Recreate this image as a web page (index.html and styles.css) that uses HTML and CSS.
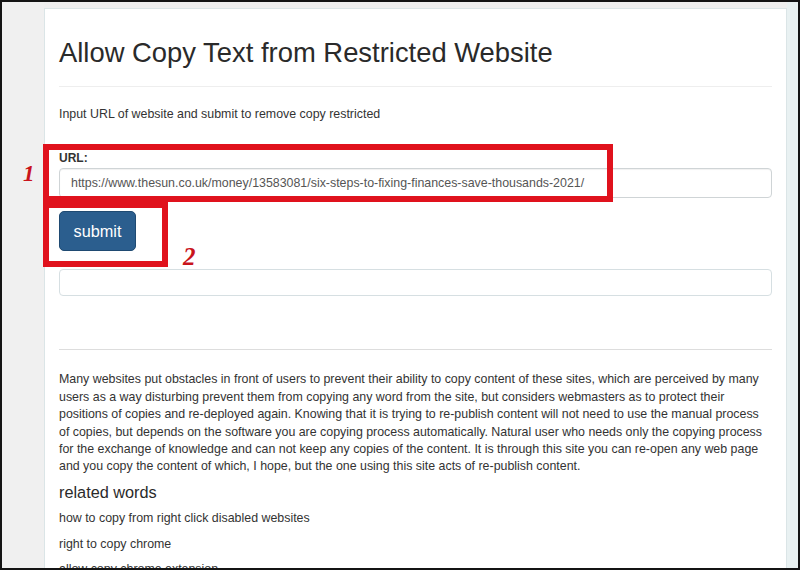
FILE: index.html
```html
<!DOCTYPE html>
<html lang="en">
<head>
<meta charset="utf-8">
<title>Allow Copy Text from Restricted Website</title>
<link rel="stylesheet" href="styles.css">
</head>
<body>
<div class="frame">
  <div class="gutter"></div>
  <main class="panel">
    <h2 class="title">Allow Copy Text from Restricted Website</h2>
    <hr class="rule">
    <p class="intro">Input URL of website and submit to remove copy restricted</p>
    <form class="form">
      <label class="label" for="url">URL:</label>
      <input class="field" id="url" type="text" value="https://www.thesun.co.uk/money/13583081/six-steps-to-fixing-finances-save-thousands-2021/">
      <button class="btn" type="button">submit</button>
      <div class="result"></div>
    </form>
    <hr class="rule rule-2">
    <p class="about">Many websites put obstacles in front of users to prevent their ability to copy content of these sites, which are perceived by many users as a way disturbing prevent them from copying any word from the site, but considers webmasters as to protect their positions of copies and re-deployed again. Knowing that it is trying to re-publish content will not need to use the manual process of copies, but depends on the software you are copying process automatically. Natural user who needs only the copying process for the exchange of knowledge and can not keep any copies of the content. It is through this site you can re-open any web page and you copy the content of which, I hope, but the one using this site acts of re-publish content.</p>
    <h4 class="related">related words</h4>
    <ul class="words">
      <li>how to copy from right click disabled websites</li>
      <li>right to copy chrome</li>
      <li>allow copy chrome extension</li>
    </ul>
  </main>
  <div class="strip"></div>

  <div class="mark mark-1"></div>
  <div class="mark mark-2"></div>
  <span class="num num-1">1</span>
  <span class="num num-2">2</span>
</div>
</body>
</html>
```

FILE: styles.css
```css
* { box-sizing: border-box; }

html, body {
  margin: 0;
  padding: 0;
  background: #111;
}

.frame {
  position: relative;
  width: 800px;
  height: 570px;
  border: 2px solid #141414;
  overflow: hidden;
  display: flex;
  align-items: flex-start;
  background: #efefef;
  font-family: "Liberation Sans", Arial, Helvetica, sans-serif;
  color: #333;
}

.gutter {
  width: 42px;
  flex: none;
  align-self: stretch;
  background: #f0f0f0;
}

.panel {
  width: 743px;
  flex: none;
  margin-top: 6px;
  min-height: 600px;
  background: #fff;
  border: 1px solid #dbe5e7;
  padding: 0 14px;
}

.strip {
  flex: 1;
  align-self: stretch;
  background: #e9f1f2;
}

.title {
  margin: 29px 0 0;
  font-size: 27.4px;
  line-height: 30px;
  font-weight: 400;
  color: #2a2a2a;
}

.rule {
  margin: 18px 0 0;
  border: 0;
  border-top: 1px solid #eeeeee;
  height: 0;
}

.intro {
  margin: 19px 0 0;
  font-size: 12.4px;
  line-height: 17.4px;
}

.form {
  margin: 27px 0 0;
  display: flex;
  flex-direction: column;
  align-items: flex-start;
}

.label {
  font-size: 12px;
  line-height: 17px;
  font-weight: 700;
}

.field {
  margin-top: 1px;
  width: 100%;
  height: 30px;
  border: 1px solid #cfd4d6;
  border-radius: 4px;
  padding: 0 11px;
  font-family: inherit;
  font-size: 12.4px;
  color: #555;
  background: #fff;
  box-shadow: inset 0 1px 1px rgba(0,0,0,0.06);
}

.btn {
  margin-top: 13px;
  width: 77px;
  height: 40px;
  border: 1px solid #1f4a72;
  border-radius: 5px;
  background: #2b5e8e;
  color: #fff;
  font-family: inherit;
  font-size: 16.3px;
  padding: 0;
}

.result {
  margin-top: 18px;
  width: 100%;
  height: 27px;
  border: 1px solid #d6dfe2;
  border-radius: 4px;
}

.rule-2 {
  margin-top: 53px;
  border-top-color: #dddddd;
}

.about {
  margin: 21px 0 0;
  font-size: 12.4px;
  line-height: 17.4px;
}

.related {
  margin: 7px 0 0;
  font-size: 16.3px;
  line-height: 18px;
  font-weight: 400;
  color: #2a2a2a;
}

.words {
  list-style: none;
  margin: 9px 0 0;
  padding: 0;
  font-size: 12.4px;
  line-height: 17.4px;
}

.words li + li {
  margin-top: 8.4px;
}

/* annotation overlays */
.mark {
  position: absolute;
  border: 6px solid #e0121d;
}

.mark-1 {
  left: 41px;
  top: 142px;
  width: 570px;
  height: 58px;
}

.mark-2 {
  left: 41px;
  top: 200px;
  width: 125px;
  height: 65px;
}

.num {
  position: absolute;
  font-family: "Liberation Serif", "Times New Roman", serif;
  font-weight: 700;
  font-style: italic;
  line-height: 1;
  color: #c9141c;
}

.num-1 {
  left: 21px;
  top: 160px;
  font-size: 23px;
}

.num-2 {
  left: 181px;
  top: 242px;
  font-size: 25px;
}
```
